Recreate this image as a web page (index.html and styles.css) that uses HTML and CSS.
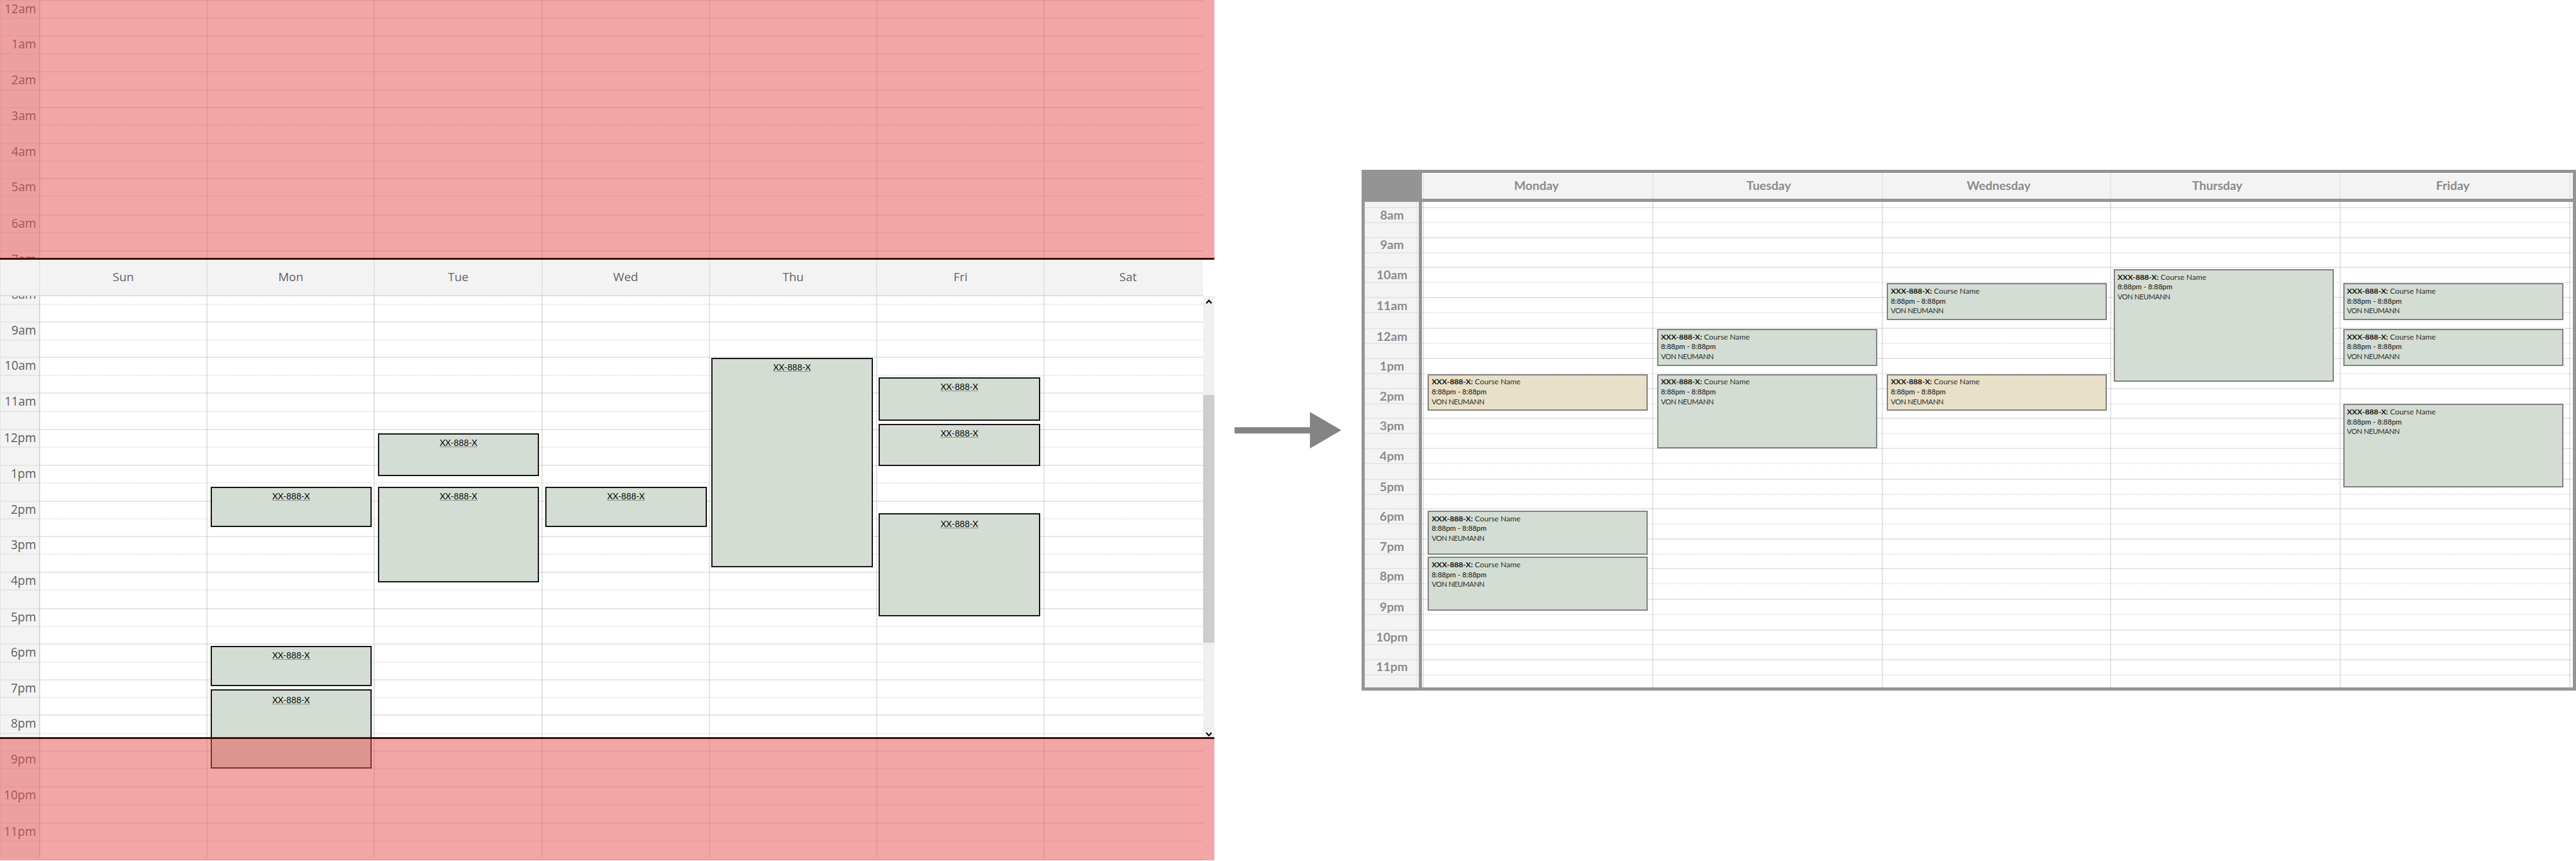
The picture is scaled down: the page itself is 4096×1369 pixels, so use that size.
FILE: index.html
```html
<!DOCTYPE html>
<html lang="en">
<head>
<meta charset="utf-8">
<title>Weekly schedule: before and after</title>
<link rel="stylesheet" href="styles.css">
</head>
<body>
<main class="comparison">

  <section class="before">
    <div class="week">
      <div class="week-rows">
        <div class="row"><span class="hour">12am</span></div>
        <div class="row"><span class="hour">1am</span></div>
        <div class="row"><span class="hour">2am</span></div>
        <div class="row"><span class="hour">3am</span></div>
        <div class="row"><span class="hour">4am</span></div>
        <div class="row"><span class="hour">5am</span></div>
        <div class="row"><span class="hour">6am</span></div>
        <div class="row"><span class="hour">7am</span></div>
        <div class="row"><span class="hour">8am</span></div>
        <div class="row"><span class="hour">9am</span></div>
        <div class="row"><span class="hour">10am</span></div>
        <div class="row"><span class="hour">11am</span></div>
        <div class="row"><span class="hour">12pm</span></div>
        <div class="row"><span class="hour">1pm</span></div>
        <div class="row"><span class="hour">2pm</span></div>
        <div class="row"><span class="hour">3pm</span></div>
        <div class="row"><span class="hour">4pm</span></div>
        <div class="row"><span class="hour">5pm</span></div>
        <div class="row"><span class="hour">6pm</span></div>
        <div class="row"><span class="hour">7pm</span></div>
        <div class="row"><span class="hour">8pm</span></div>
        <div class="row"><span class="hour">9pm</span></div>
        <div class="row"><span class="hour">10pm</span></div>
        <div class="row"><span class="hour">11pm</span></div>
      </div>
      <div class="week-days">
        <div class="day"></div>
        <div class="day">
          <div class="event" style="top:81.13rem;height:6.74rem"><span>XX-888-X</span></div>
          <div class="event" style="top:107.73rem;height:6.64rem"><span>XX-888-X</span></div>
          <div class="event low" style="top:114.93rem;height:13.2rem"><span>XX-888-X</span></div>
        </div>
        <div class="day">
          <div class="event" style="top:72.23rem;height:7.2rem"><span>XX-888-X</span></div>
          <div class="event" style="top:81.13rem;height:15.97rem"><span>XX-888-X</span></div>
        </div>
        <div class="day">
          <div class="event" style="top:81.13rem;height:6.74rem"><span>XX-888-X</span></div>
        </div>
        <div class="day">
          <div class="event near" style="top:59.7rem;height:34.85rem"><span>XX-888-X</span></div>
        </div>
        <div class="day">
          <div class="event near" style="top:62.95rem;height:7.2rem"><span>XX-888-X</span></div>
          <div class="event near" style="top:70.67rem;height:7.06rem"><span>XX-888-X</span></div>
          <div class="event near low" style="top:85.6rem;height:17.17rem"><span>XX-888-X</span></div>
        </div>
        <div class="day"></div>
      </div>
    </div>

    <div class="week-header">
      <span></span><span>Sun</span><span>Mon</span><span>Tue</span><span>Wed</span><span>Thu</span><span>Fri</span><span>Sat</span>
    </div>

    <div class="scrollbar">
      <svg class="chevron" viewBox="0 0 10 7"><path d="M1 6 5 1.6 9 6"/></svg>
      <div class="thumb"></div>
      <svg class="chevron" viewBox="0 0 10 7"><path d="M1 1 5 5.4 9 1"/></svg>
    </div>

    <div class="hidden-zone zone-top"></div>
    <div class="hidden-zone zone-bottom"></div>
  </section>

  <svg class="arrow" viewBox="0 0 178 61"><path d="M0 25.3H125.7V0L178 30.4 125.7 61V36H0Z"/></svg>

  <section class="after">
    <header class="after-header">
      <span class="corner"></span>
      <div class="after-names">
        <span class="name mon">Monday</span><span class="name tue">Tuesday</span><span class="name wed">Wednesday</span><span class="name thu">Thursday</span><span class="name fri">Friday</span><span class="name"></span>
      </div>
    </header>
    <div class="after-body">
      <div class="after-rows">
        <div class="lead"><span class="slot"></span></div>
        <div class="row"><span class="slot">8am</span></div>
        <div class="row"><span class="slot up">9am</span></div>
        <div class="row"><span class="slot">10am</span></div>
        <div class="row"><span class="slot down">11am</span></div>
        <div class="row"><span class="slot down">12am</span></div>
        <div class="row"><span class="slot">1pm</span></div>
        <div class="row"><span class="slot">2pm</span></div>
        <div class="row"><span class="slot">3pm</span></div>
        <div class="row"><span class="slot">4pm</span></div>
        <div class="row"><span class="slot">5pm</span></div>
        <div class="row"><span class="slot">6pm</span></div>
        <div class="row"><span class="slot">7pm</span></div>
        <div class="row"><span class="slot">8pm</span></div>
        <div class="row"><span class="slot">9pm</span></div>
        <div class="row"><span class="slot up">10pm</span></div>
        <div class="row"><span class="slot up">11pm</span></div>
      </div>
      <div class="after-columns">
        <div class="gutter"></div>
        <div class="after-days">
          <div class="day">
            <article class="course tan" style="top:28.7rem;height:6.17rem"><p><b>XXX-888-X:</b> Course Name</p><p class="time">8:88pm - 8:88pm</p><p class="room">VON NEUMANN</p></article>
            <article class="course" style="top:51.5rem;height:7.3rem"><p><b>XXX-888-X:</b> Course Name</p><p class="time">8:88pm - 8:88pm</p><p class="room">VON NEUMANN</p></article>
            <article class="course" style="top:59.17rem;height:9rem"><p><b>XXX-888-X:</b> Course Name</p><p class="time">8:88pm - 8:88pm</p><p class="room">VON NEUMANN</p></article>
          </div>
          <div class="day">
            <article class="course" style="top:21.2rem;height:6.2rem"><p><b>XXX-888-X:</b> Course Name</p><p class="time">8:88pm - 8:88pm</p><p class="room">VON NEUMANN</p></article>
            <article class="course" style="top:28.7rem;height:12.47rem"><p><b>XXX-888-X:</b> Course Name</p><p class="time">8:88pm - 8:88pm</p><p class="room">VON NEUMANN</p></article>
          </div>
          <div class="day">
            <article class="course" style="top:13.57rem;height:6.13rem"><p><b>XXX-888-X:</b> Course Name</p><p class="time">8:88pm - 8:88pm</p><p class="room">VON NEUMANN</p></article>
            <article class="course tan" style="top:28.7rem;height:6.17rem"><p><b>XXX-888-X:</b> Course Name</p><p class="time">8:88pm - 8:88pm</p><p class="room">VON NEUMANN</p></article>
          </div>
          <div class="day">
            <article class="course near" style="top:11.23rem;height:18.8rem"><p><b>XXX-888-X:</b> Course Name</p><p class="time">8:88pm - 8:88pm</p><p class="room">VON NEUMANN</p></article>
          </div>
          <div class="day">
            <article class="course near" style="top:13.57rem;height:6.13rem"><p><b>XXX-888-X:</b> Course Name</p><p class="time">8:88pm - 8:88pm</p><p class="room">VON NEUMANN</p></article>
            <article class="course near" style="top:21.2rem;height:6.2rem"><p><b>XXX-888-X:</b> Course Name</p><p class="time">8:88pm - 8:88pm</p><p class="room">VON NEUMANN</p></article>
            <article class="course near" style="top:33.7rem;height:13.95rem"><p><b>XXX-888-X:</b> Course Name</p><p class="time">8:88pm - 8:88pm</p><p class="room">VON NEUMANN</p></article>
          </div>
          <div class="day"></div>
        </div>
      </div>
    </div>
  </section>

</main>
</body>
</html>
```
FILE: styles.css
```css
/* 1rem is ten design units */
html {
  font-size: 9.5367px;
}

*,
*::before,
*::after {
  box-sizing: border-box;
}

body {
  margin: 0;
  background: #fff;
  overflow: hidden;
}

p {
  margin: 0;
}

.comparison {
  display: flex;
  align-items: flex-start;
  width: 429.5rem;
  height: 143.5rem;
}

/* shared hour rows: solid line on the hour, dotted on the half */
.row {
  position: relative;
  display: flex;
  border-top: 2px solid #e6e6e6;
}

.row::after {
  content: "";
  position: absolute;
  left: 0;
  right: 0;
  height: 2px;
  background: repeating-linear-gradient(90deg, rgba(0, 0, 0, .07) 0 2px, rgba(0, 0, 0, .025) 2px 3px);
}

.week-rows,
.after-rows {
  position: relative;
  display: grid;
  grid-area: 1 / 1;
}

.day {
  position: relative;
  border-left: 2px solid rgba(0, 0, 0, .105);
}

/* ---------- full week, before ---------- */

.before {
  position: relative;
  flex: none;
  width: 202.5rem;
  height: 143.4rem;
  font-family: "Open Sans", "Noto Sans", sans-serif;
}

.week {
  display: grid;
  width: 200.6rem;
  height: 143.4rem;
  border-bottom: 2px solid #ececec;
  overflow: hidden;
}

.week-rows {
  grid-template-rows:
    5.9rem 5.97rem 5.96rem 5.94rem 5.86rem 6.1rem 5.97rem 5.96rem
    5.94rem 5.9rem 5.97rem 6.06rem 5.97rem 5.93rem 5.87rem 6rem
    6.07rem 5.96rem 5.9rem 5.94rem 5.9rem 6.06rem 6.04rem 6rem;
}

.week-rows .row::after {
  top: 2.77rem;
}

.hour {
  width: 6.7rem;
  padding-right: .68rem;
  border-left: 1px solid #e2e2e2;
  background: #f3f3f3;
  color: #5e5e5e;
  font-size: 2rem;
  line-height: 2.62rem;
  text-align: right;
}

.week-days {
  position: relative;
  grid-area: 1 / 1;
  display: grid;
  grid-template-columns: repeat(7, 27.92rem);
  height: 143rem;
  padding-left: 6.5rem;
}

.event {
  position: absolute;
  left: .45rem;
  width: 26.9rem;
  padding-top: .4rem;
  border: 2px solid #141414;
  background: #d3ddd3;
  color: #000;
  font-family: Lato, sans-serif;
  font-size: 1.43rem;
  line-height: 2rem;
  text-align: center;
}

.event.near {
  left: .22rem;
}

.event.low {
  padding-top: .6rem;
}

.event span {
  text-decoration: underline;
  text-decoration-color: rgba(0, 0, 0, .35);
  text-decoration-thickness: 1px;
  text-decoration-skip-ink: none;
  text-underline-offset: 1px;
}

.week-header {
  position: absolute;
  top: 43.33rem;
  left: 0;
  display: grid;
  grid-template-columns: 6.5rem repeat(7, 27.92rem);
  width: 200.6rem;
  height: 6.07rem;
  border-bottom: 2px solid #dedede;
  background: #f3f3f3;
  color: #626262;
  font-size: 1.98rem;
  line-height: 5.8rem;
  text-align: center;
  overflow: hidden;
}

.week-header span {
  border-left: 2px solid #e3e3e3;
}

.week-header span:first-child {
  border-left-width: 1px;
}

.scrollbar {
  position: absolute;
  top: 49.4rem;
  right: 0;
  display: flex;
  flex-direction: column;
  align-items: center;
  width: 1.9rem;
  height: 73.5rem;
  padding-top: .5rem;
  background: #f0f0f0;
}

.chevron {
  flex: none;
  width: 1.1rem;
  height: .77rem;
  fill: none;
  stroke: #000;
  stroke-width: 2;
}

.thumb {
  width: 100%;
  height: 41.3rem;
  margin: 15.2rem 0 14.9rem;
  background: #cdcdcd;
}

.hidden-zone {
  position: absolute;
  left: 0;
  width: 202.5rem;
  background: rgba(231, 77, 77, .5);
  background-clip: padding-box;
}

.zone-top {
  top: 0;
  height: 43.35rem;
  border-bottom: 3px solid #450306;
}

.zone-bottom {
  top: 122.9rem;
  height: 20.5rem;
  border-top: 3px solid #450a0c;
}

/* ---------- arrow ---------- */

.arrow {
  flex: none;
  width: 17.8rem;
  height: 6.1rem;
  margin: 68.65rem 3.43rem 0 3.33rem;
  fill: #848484;
}

/* ---------- working week, after ---------- */

.after {
  flex: none;
  width: 202.46rem;
  height: 86.9rem;
  margin-top: 28.27rem;
  border: 5px solid #949494;
  background: #fff;
  color: #8a8a8a;
  font-family: Lato, "Open Sans", sans-serif;
}

.after-header {
  display: flex;
  height: 4.85rem;
  border-bottom: 5px solid #949494;
  overflow: hidden;
}

.corner {
  flex: none;
  width: 9.5rem;
  background: #949494;
}

.after-names,
.after-days {
  display: grid;
  grid-template-columns: 38.22rem 38.33rem 38.05rem 38.25rem 38.3rem 1fr;
  flex: 1;
  padding-left: .13rem;
}

.after-names {
  background: #f3f3f3;
  box-shadow: inset 2px 2px 0 #fff;
}

.name {
  border-left: 2px solid #e6e6e6;
  font-size: 2.04rem;
  font-weight: 700;
  line-height: 4.15rem;
  text-align: center;
}

.mon { padding-right: .5rem; }
.tue { padding-left: .4rem; }
.wed { padding-left: .7rem; }
.thu { padding-right: 2.7rem; }
.fri { padding-right: .7rem; }

.after-body {
  display: grid;
  height: 81rem;
  overflow: hidden;
}

.after-rows {
  grid-template-rows:
    .9rem 4.97rem 5rem 5.03rem 5.1rem 5.03rem 5rem 4.97rem 5.04rem
    5.1rem 4.99rem 5rem 4.97rem 5.05rem 5.13rem 4.99rem 1fr;
}

.lead {
  display: flex;
}

.after-rows .row::after {
  top: 2.3rem;
}

.slot {
  width: 9rem;
  background: #f3f3f3;
  font-size: 2.06rem;
  font-weight: 700;
  line-height: 2.25rem;
  text-align: center;
}

.slot.up { line-height: 2rem; }
.slot.down { line-height: 2.55rem; }

.after-columns {
  position: relative;
  grid-area: 1 / 1;
  display: flex;
}

.gutter {
  flex: none;
  width: 9.5rem;
  border-right: 5px solid #949494;
  background: linear-gradient(90deg, transparent 0 8.55rem, rgba(0, 0, 0, .035) 8.55rem 8.85rem, transparent 8.85rem);
}

.course {
  position: absolute;
  left: .65rem;
  width: 36.7rem;
  padding: .28rem 0 0 .42rem;
  border: 2px solid #808080;
  background: #d3ddd3;
  color: #2e2e2e;
  font-size: 1.28rem;
  line-height: 1.65rem;
}

.course.near {
  left: .4rem;
}

.course.tan {
  background: #e8e0c8;
}

.course b {
  color: #161616;
  font-weight: 700;
}

.time {
  color: #1f1f1f;
  font-size: 1.2rem;
  font-weight: 500;
}

.room {
  font-size: 1.2rem;
  letter-spacing: -.04rem;
}
```
